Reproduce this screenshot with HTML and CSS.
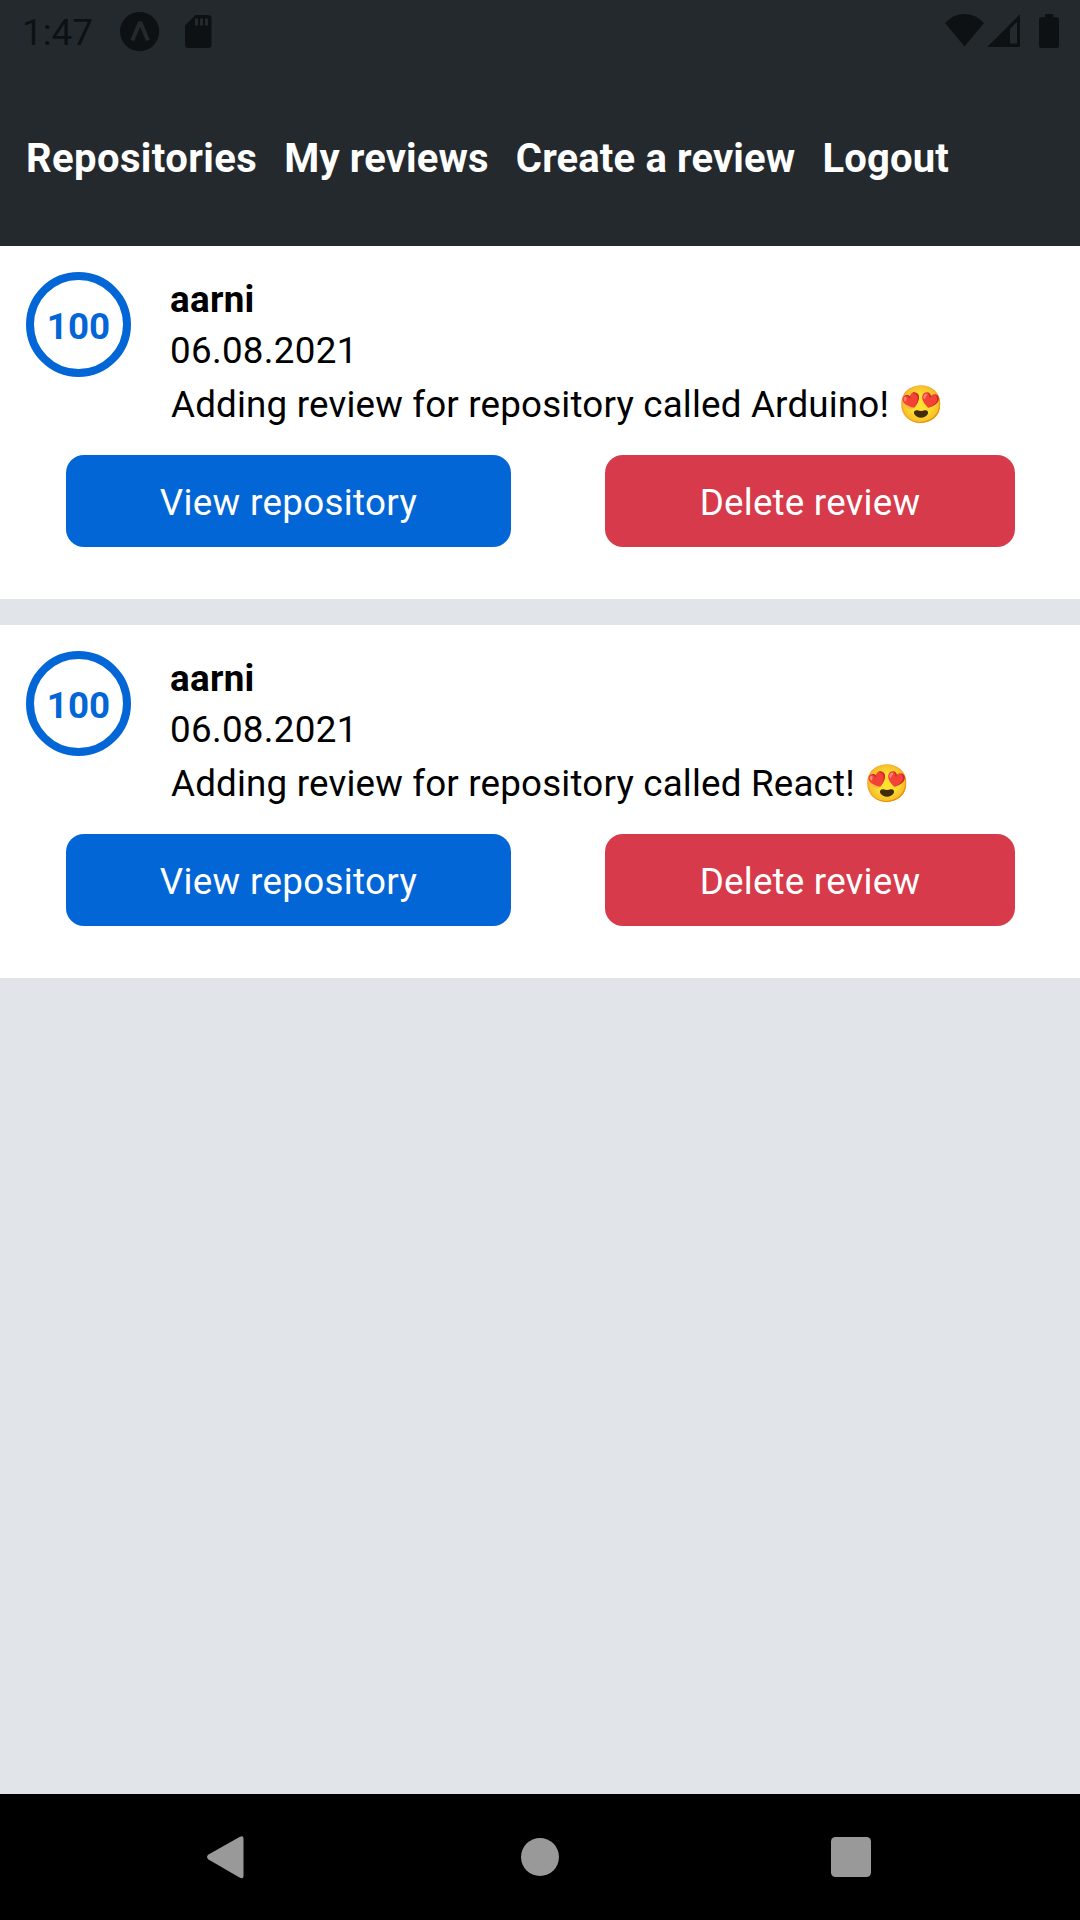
FILE: index.html
```html
<!DOCTYPE html>
<html lang="en">
<head>
<meta charset="utf-8">
<title>My reviews</title>
<link rel="stylesheet" href="styles.css">
</head>
<body>
<div class="screen">
  <header class="appbar">
    <div class="status">
      <span class="clock">1:47</span>
      <svg class="status-left" width="100" height="64" viewBox="113 0 100 64">
        <circle cx="139.6" cy="31.6" r="19.6" fill="#0e1113"/>
        <path d="M132.300 40.500 L139.500 23.500 H140.800 L148 40.500" fill="none" stroke="#24292e" stroke-width="4"/>
        <path d="M195.500 15H208q3.500 0 3.500 3.500V44.500q0 3.500-3.500 3.500H188.500q-3.500 0-3.500-3.500V25.500Z" fill="#0e1113"/>
        <path d="M195 18.500h3v7h-3zM200 18.500h3v7h-3zM205 18.500h3v7h-3z" fill="#24292e"/>
      </svg>
      <svg class="status-right" width="120" height="64" viewBox="940 0 120 64">
        <path d="M964.500 46.500 945 23q8.500-9 19.500-9t19.500 9Z" fill="#0e1113"/>
        <path fill-rule="evenodd" d="M987.300 47 1020 14.300V47ZM1010 43.500h7V21.700l-7 7Z" fill="#0e1113"/>
        <path d="M1045 14h8.300v3.300h3.700q2 0 2 2V46q0 2-2 2h-16q-2 0-2-2V19.300q0-2 2-2h4Z" fill="#0e1113"/>
      </svg>
    </div>
    <nav class="tabs">
      <span class="wide">Repositories</span><span>My reviews</span><span>Create a review</span><span>Logout</span>
    </nav>
  </header>
  <main class="list">
    <article class="card">
      <div class="review">
        <div class="rating">100</div>
        <div class="info">
          <div class="name">aarni</div>
          <div class="date">06.08.2021</div>
          <div class="text">Adding review for repository called Arduino! 😍</div>
        </div>
      </div>
      <div class="actions">
        <div class="btn view">View repository</div>
        <div class="btn delete">Delete review</div>
      </div>
    </article>
    <article class="card">
      <div class="review">
        <div class="rating">100</div>
        <div class="info">
          <div class="name">aarni</div>
          <div class="date">06.08.2021</div>
          <div class="text">Adding review for repository called React! 😍</div>
        </div>
      </div>
      <div class="actions">
        <div class="btn view">View repository</div>
        <div class="btn delete">Delete review</div>
      </div>
    </article>
  </main>
  <footer class="navbar">
    <svg width="1080" height="126" viewBox="0 1794 1080 126" fill="#999">
      <path d="M208.500 1854.500 239.500 1837q4-2 4 1.500V1876q0 3.500-4 1.500L208.500 1859.500q-3-2.500 0-5Z"/>
      <circle cx="540" cy="1857" r="19"/>
      <rect x="831" y="1837" width="40" height="40" rx="4.500"/>
    </svg>
  </footer>
</div>
</body>
</html>
```
FILE: styles.css
```css
body {
  margin: 0;
  font-family: Roboto, "Noto Color Emoji", sans-serif;
  color: #000;
}
.screen {
  width: 1080px;
  height: 1920px;
  display: flex;
  flex-direction: column;
  background: #e1e4e8;
}
.appbar {
  height: 246px;
  background: #24292e;
}
.status {
  height: 64px;
  display: flex;
  align-items: center;
}
.clock {
  margin-left: 22px;
  width: 91px;
  font-size: 36.75px;
  line-height: 64px;
  padding-top: 2px;
  color: #0e1113;
}
.status-right {
  margin-left: auto;
  margin-right: 20px;
}
.tabs {
  display: flex;
  gap: 27px;
  padding: 71px 26px 0;
  font-size: 40px;
  line-height: 48px;
  letter-spacing: 0.15px;
  font-weight: 700;
  color: #fff;
  white-space: nowrap;
}
.wide {
  letter-spacing: 0.4px;
}
.list {
  flex: 1;
  display: flex;
  flex-direction: column;
  gap: 26px;
}
.card {
  height: 353px;
  box-sizing: border-box;
  padding: 26px;
  background: #fff;
  font-size: 36.75px;
}
.review {
  display: flex;
  gap: 39px;
  height: 183px;
}
.rating {
  box-sizing: border-box;
  width: 105px;
  height: 105px;
  border: 8px solid #0366d6;
  border-radius: 50%;
  color: #0366d6;
  font-weight: 700;
  text-align: center;
  line-height: 93px;
}
.info {
  padding-top: 3px;
  white-space: nowrap;
}
.name {
  font-weight: 700;
  line-height: 50px;
  letter-spacing: 0.3px;
}
.date {
  line-height: 51px;
  letter-spacing: 0.3px;
}
.text {
  padding-left: 1px;
  line-height: 58px;
  letter-spacing: 0.18px;
}
.actions {
  display: flex;
  justify-content: space-between;
  padding: 0 39px 0 40px;
}
.btn {
  height: 92px;
  line-height: 95px;
  border-radius: 18px;
  color: #fff;
  text-align: center;
}
.view {
  width: 445px;
  background: #0366d6;
  letter-spacing: 0.33px;
}
.delete {
  width: 410px;
  background: #d73a4a;
  letter-spacing: 0.2px;
}
.navbar {
  height: 126px;
  background: #000;
}
.navbar svg {
  display: block;
}
```
